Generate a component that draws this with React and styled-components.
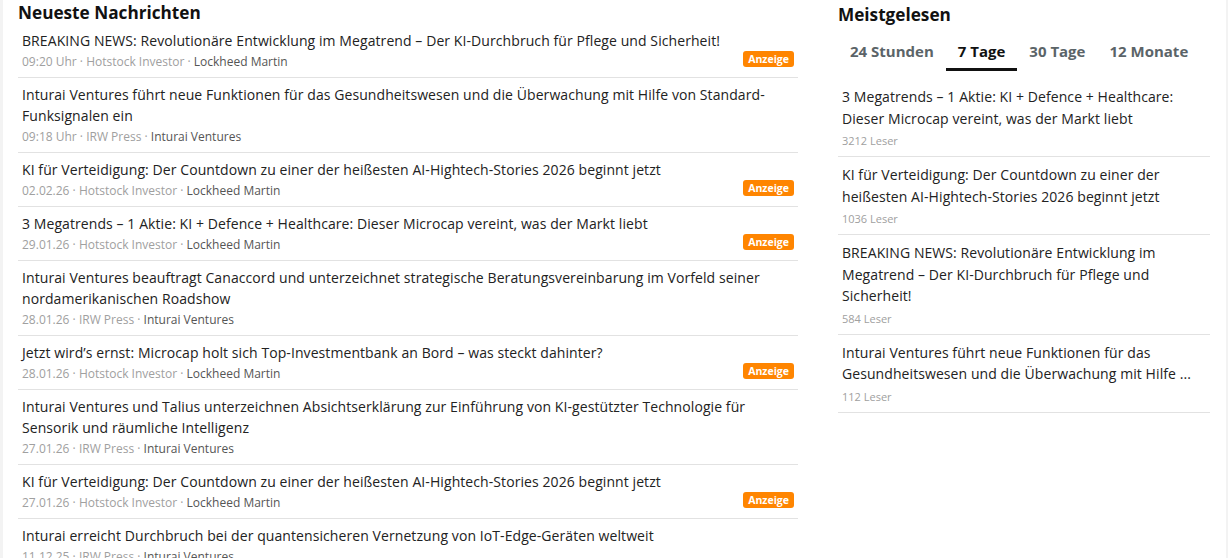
import React from "react";
import styled, { createGlobalStyle } from "styled-components";

const Global = createGlobalStyle`
  html, body { margin: 0; padding: 0; background: #f3f3f3; }
  body { font-family: "Open Sans", "Noto Sans", sans-serif; color: #222; }
  #root { min-height: 558px; }
`;

const Page = styled.div`
  margin: 0 2px 0 3px;
  min-height: 558px;
  background: #fff;
  padding-left: 15px;
  display: grid;
  grid-template-columns: 780px 372px;
  column-gap: 40px;
  align-items: start;
`;

const Column = styled.section`
  display: flex;
  flex-direction: column;
`;

const Heading = styled.h2`
  margin: 0;
  font-size: 17.2px;
  line-height: 23px;
  font-weight: 700;
  color: #111;
  padding-top: ${(p) => p.$top || 3}px;
`;

const NewsList = styled.ul`
  list-style: none;
  margin: 0;
  padding: ${(p) => p.$top || 0}px 0 0;
`;

const NewsItem = styled.li`
  border-bottom: 1px solid #e2e2e2;
  padding: 6px 4px 6px;
`;

const Title = styled.a`
  display: block;
  font-size: 14px;
  line-height: 21px;
  letter-spacing: 0.08px;
  color: #222;
  text-decoration: none;
  padding-right: ${(p) => p.$pr || 0}px;
`;

const MetaRow = styled.div`
  display: flex;
  align-items: flex-start;
  justify-content: space-between;
  margin-top: 2px;
  height: 18px;
`;

const Meta = styled.span`
  font-size: 12px;
  line-height: 18px;
  color: #a0a0a0;
`;

const Tag = styled.span`
  color: #555;
`;

const Badge = styled.span`
  background: #ff8500;
  color: #fff;
  font-size: 10.5px;
  font-weight: 700;
  line-height: 16px;
  height: 16px;
  padding: 0 5px;
  border-radius: 3px;
  margin-top: -2px;
`;

const Tabs = styled.div`
  display: flex;
  margin-top: 10px;
`;

const Tab = styled.button`
  border: 0;
  background: none;
  font-family: inherit;
  font-size: 15px;
  font-weight: 700;
  color: ${(p) => (p.$active ? "#111" : "#5b6468")};
  padding: 5px 12px 6px;
  line-height: 21px;
  border-bottom: 3px solid ${(p) => (p.$active ? "#111" : "transparent")};
  cursor: pointer;
`;

const TopItem = styled.li`
  border-bottom: 1px solid #e2e2e2;
  padding: 7px 4px 7px;
`;

const TopTitle = styled.a`
  display: block;
  font-size: 14px;
  line-height: 21.5px;
  letter-spacing: 0.08px;
  color: #222;
  text-decoration: none;
`;

const Readers = styled.div`
  font-size: 11px;
  line-height: 16px;
  color: #a0a0a0;
  margin-top: 4px;
`;

const news = [
  { t: "BREAKING NEWS: Revolutionäre Entwicklung im Megatrend – Der KI-Durchbruch für Pflege und Sicherheit!", d: "09:20 Uhr", s: "Hotstock Investor", c: "Lockheed Martin", ad: true },
  { t: "Inturai Ventures führt neue Funktionen für das Gesundheitswesen und die Überwachung mit Hilfe von Standard-Funksignalen ein", d: "09:18 Uhr", s: "IRW Press", c: "Inturai Ventures" },
  { t: "KI für Verteidigung: Der Countdown zu einer der heißesten AI-Hightech-Stories 2026 beginnt jetzt", d: "02.02.26", s: "Hotstock Investor", c: "Lockheed Martin", ad: true },
  { t: "3 Megatrends – 1 Aktie: KI + Defence + Healthcare: Dieser Microcap vereint, was der Markt liebt", d: "29.01.26", s: "Hotstock Investor", c: "Lockheed Martin", ad: true },
  { t: "Inturai Ventures beauftragt Canaccord und unterzeichnet strategische Beratungsvereinbarung im Vorfeld seiner nordamerikanischen Roadshow", d: "28.01.26", s: "IRW Press", c: "Inturai Ventures" },
  { t: "Jetzt wird’s ernst: Microcap holt sich Top-Investmentbank an Bord – was steckt dahinter?", d: "28.01.26", s: "Hotstock Investor", c: "Lockheed Martin", ad: true },
  { t: "Inturai Ventures und Talius unterzeichnen Absichtserklärung zur Einführung von KI-gestützter Technologie für Sensorik und räumliche Intelligenz", d: "27.01.26", s: "IRW Press", c: "Inturai Ventures" },
  { t: "KI für Verteidigung: Der Countdown zu einer der heißesten AI-Hightech-Stories 2026 beginnt jetzt", d: "27.01.26", s: "Hotstock Investor", c: "Lockheed Martin", ad: true },
  { t: "Inturai erreicht Durchbruch bei der quantensicheren Vernetzung von IoT-Edge-Geräten weltweit", d: "11.12.25", s: "IRW Press", c: "Inturai Ventures" },
];

const top = [
  { t: "3 Megatrends – 1 Aktie: KI + Defence + Healthcare: Dieser Microcap vereint, was der Markt liebt", r: 3212 },
  { t: "KI für Verteidigung: Der Countdown zu einer der heißesten AI-Hightech-Stories 2026 beginnt jetzt", r: 1036 },
  { t: "BREAKING NEWS: Revolutionäre Entwicklung im Megatrend – Der KI-Durchbruch für Pflege und Sicherheit!", r: 584 },
  { t: "Inturai Ventures führt neue Funktionen für das Gesundheitswesen und die Überwachung mit Hilfe ...", r: 112 },
];

const tabs = ["24 Stunden", "7 Tage", "30 Tage", "12 Monate"];

export default function App() {
  return (
    <>
      <Global />
      <Page>
        <Column>
          <Heading $top={1}>Neueste Nachrichten</Heading>
          <NewsList>
            {news.map((n, i) => (
              <NewsItem key={i}>
                <Title href="#" $pr={14}>{n.t}</Title>
                <MetaRow>
                  <Meta>
                    {n.d} · {n.s} · <Tag>{n.c}</Tag>
                  </Meta>
                  {n.ad && <Badge>Anzeige</Badge>}
                </MetaRow>
              </NewsItem>
            ))}
          </NewsList>
        </Column>
        <Column>
          <Heading $top={3}>Meistgelesen</Heading>
          <Tabs>
            {tabs.map((t) => (
              <Tab key={t} $active={t === "7 Tage"}>{t}</Tab>
            ))}
          </Tabs>
          <NewsList $top={8}>
            {top.map((n, i) => (
              <TopItem key={i}>
                <TopTitle href="#">{n.t}</TopTitle>
                <Readers>{n.r} Leser</Readers>
              </TopItem>
            ))}
          </NewsList>
        </Column>
      </Page>
    </>
  );
}
